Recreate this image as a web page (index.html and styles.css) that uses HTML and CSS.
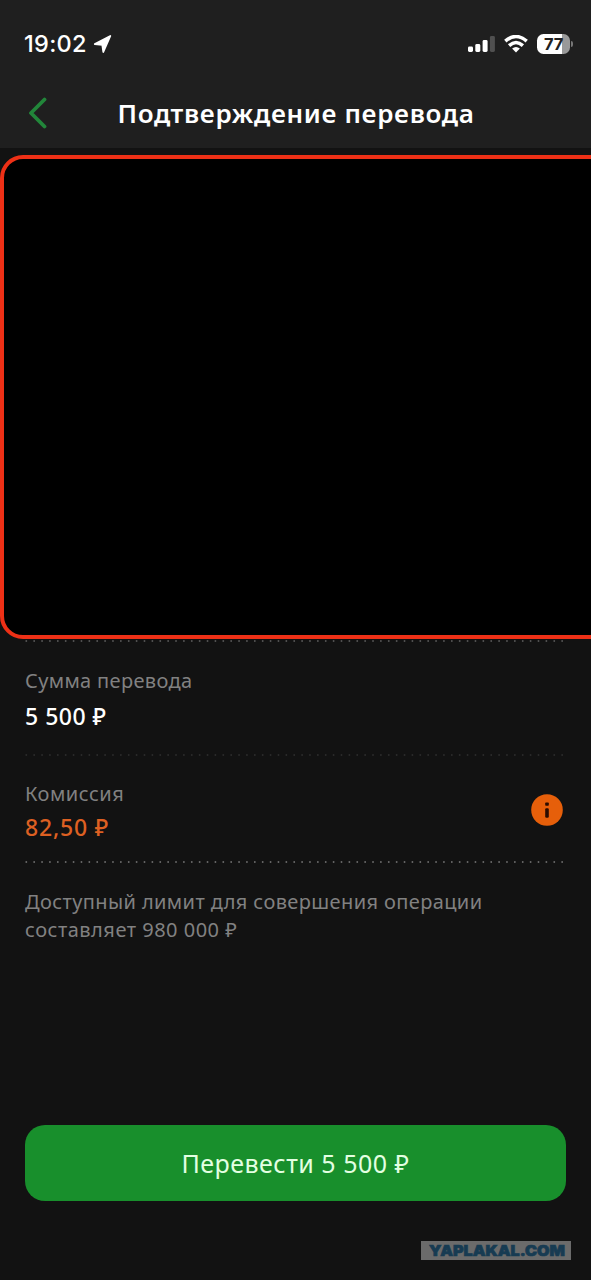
FILE: index.html
```html
<!DOCTYPE html>
<html lang="ru">
<head>
<meta charset="utf-8">
<title>Подтверждение перевода</title>
<link rel="stylesheet" href="styles.css">
</head>
<body>
<div class="screen">
  <header class="header">
    <div class="status">
      <span class="time">19:02</span>
      <svg class="location" width="20" height="20" viewBox="0 0 20 20"><path d="M17.3 2 10.3 18 9.3 10.8 1.8 10Z" fill="#fff" stroke="#fff" stroke-width="1.8" stroke-linejoin="round"/></svg>
      <svg class="signal" width="28" height="18" viewBox="0 0 28 18"><g fill="#fff"><rect x="0" y="11.5" width="5" height="5.5" rx="1.4"/><rect x="7.3" y="9" width="5" height="8" rx="1.4"/><rect x="14.6" y="5" width="5" height="12" rx="1.4"/></g><rect x="21.9" y="1" width="5" height="16" rx="1.4" fill="#505050"/></svg>
      <svg class="wifi" width="24" height="18" viewBox="0 0 24 18"><g fill="none" stroke="#fff" stroke-width="3.5"><path d="M1.3 6.1Q12-3.1 22.7 6.1"/><path d="M5.1 10.6Q12 4.5 18.9 10.6"/></g><path d="M8.1 13.6Q12 10.3 15.9 13.6L12 17.6Z" fill="#fff"/></svg>
      <div class="battery"><span class="level">77</span></div>
      <span class="battery-cap"></span>
    </div>
    <div class="nav">
      <svg class="back" width="20" height="32" viewBox="0 0 20 32"><path d="M16.5 2.5 3 16 16.5 29.5" fill="none" stroke="#22863a" stroke-width="3.8" stroke-linecap="round" stroke-linejoin="round"/></svg>
      <h1 class="title">Подтверждение перевода</h1>
    </div>
  </header>
  <main class="content">
    <div class="hidden-details"></div>
    <svg class="dots" width="540" height="4"><path d="M1.3 2H540"/></svg>
    <section class="amount">
      <div class="label">Сумма перевода</div>
      <div class="value">5 500 ₽</div>
    </section>
    <svg class="dots faint" width="540" height="4"><path d="M1.3 2H540"/></svg>
    <section class="fee">
      <div>
        <div class="label">Комиссия</div>
        <div class="value orange">82,50 ₽</div>
      </div>
      <svg class="info" width="32" height="32" viewBox="0 0 32 32"><circle cx="16" cy="16" r="15.8" fill="#e65f0a"/><g fill="#2b0c00"><rect x="14.2" y="8.4" width="3.6" height="3.4" rx=".8"/><rect x="14.2" y="14.2" width="3.6" height="9.6" rx="1.2"/></g></svg>
    </section>
    <svg class="dots bright" width="540" height="4"><path d="M1.3 2H540"/></svg>
    <p class="limit">Доступный лимит для совершения операции<br><span class="limit-sum">составляет 980 000 ₽</span></p>
  </main>
  <footer class="footer">
    <button class="submit">Перевести 5 500 ₽</button>
    <div class="watermark"><svg width="150" height="19" viewBox="0 0 150 19"><text x="8" y="15" textLength="136" lengthAdjust="spacingAndGlyphs">YAPLAKAL.COM</text></svg></div>
  </footer>
</div>
</body>
</html>
```
FILE: styles.css
```css
* { box-sizing: border-box; }
body { margin: 0; background: #121212; font-family: "Noto Sans", sans-serif; }
.screen { width: 591px; height: 1280px; overflow: hidden; display: flex; flex-direction: column; background: #121212; color: #fff; }
.header { height: 148px; flex: none; background: #1f1f1f; }
.status { height: 80px; padding: 7px 18px 0 24px; display: flex; align-items: center; }
.time { width: 69px; font: 500 23.5px/28px Inter, sans-serif; letter-spacing: .3px; }
.signal { margin-left: auto; }
.wifi { margin-left: 8px; }
.battery { width: 33px; height: 20px; margin-left: 9px; border-radius: 6.5px; background: linear-gradient(90deg, #fff 77%, #999 77%); display: flex; align-items: center; justify-content: center; }
.level { font: 700 16.5px/20px Inter, sans-serif; color: #202020; letter-spacing: -.3px; }
.battery-cap { width: 2px; height: 6px; margin-left: 1px; border-radius: 0 3px 3px 0; background: #777; }
.nav { height: 68px; display: flex; align-items: center; padding-left: 27.5px; }
.back { flex: none; margin-top: -2px; }
.title { margin: -2px 0 0 70px; font-size: 26px; line-height: 36px; font-weight: 600; letter-spacing: .68px; white-space: nowrap; }
.content { flex: none; padding: 7px 25px 0; }
.hidden-details { height: 484px; margin-left: -25px; margin-right: -60px; border: 4px solid #ee3016; border-radius: 23px; background: #000; }
.dots { display: block; }
.dots path { fill: none; stroke: #555; stroke-width: 1.9; stroke-linecap: round; stroke-dasharray: 0 7.88; }
.faint path { stroke: #2c2c2c; }
.bright path { stroke: #6a6a6a; }
.label { color: #818181; font-size: 20px; line-height: 28px; letter-spacing: .35px; }
.value { font-size: 23px; line-height: 32px; font-weight: 500; letter-spacing: .5px; }
.orange { color: #dd6022; letter-spacing: .8px; }
.amount { height: 110px; padding-top: 24px; }
.amount .value { margin-top: 5px; }
.fee { height: 103px; padding: 23px 3px 0 0; display: flex; justify-content: space-between; }
.fee .label { letter-spacing: .5px; }
.fee .value { margin-top: 3px; }
.info { margin-top: 14px; }
.limit { margin: 24px 0 0; color: #818181; font-size: 20px; line-height: 28px; letter-spacing: .39px; white-space: nowrap; }
.limit-sum { letter-spacing: .5px; }
.footer { margin-top: auto; height: 155px; padding: 0 25px; }
.submit { display: block; width: 541px; height: 76px; padding: 0; border: 0; border-radius: 20px; background: #188f2c; color: #e3ffe2; font: 400 25px/34px "Noto Sans", sans-serif; letter-spacing: .5px; }
.watermark { width: 150px; height: 19px; margin: 40px 0 0 396px; background: #6b6b6b; }
.watermark svg { display: block; }
.watermark text { font: 900 15px Inter, sans-serif; fill: #173b52; stroke: #173b52; stroke-width: .7; }
```
